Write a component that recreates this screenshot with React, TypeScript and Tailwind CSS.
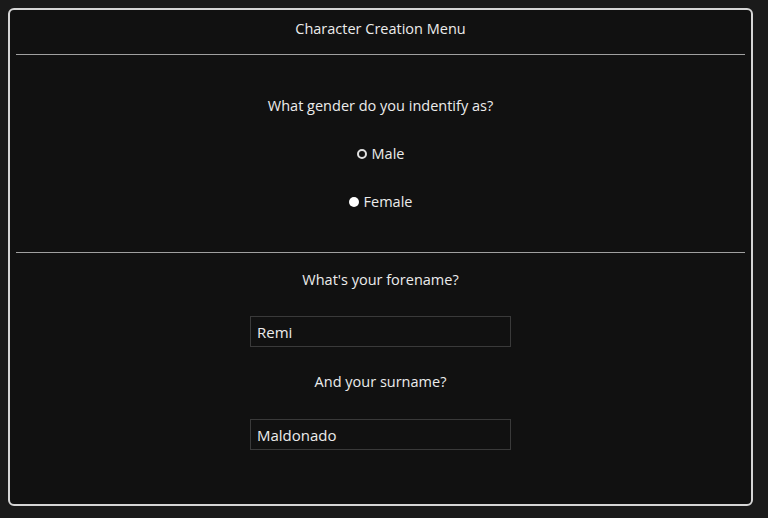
import { useState } from "react";

export default function App() {
    const [gender, setGender] = useState("female");
    const [forename, setForename] = useState("Remi");
    const [surname, setSurname] = useState("Maldonado");

    return (
        <div className="min-h-[518px] bg-[#1a1a1a] p-[8px] font-['Open_Sans',sans-serif] text-[14.5px] text-[#ececec]">
            <div className="h-[498px] w-[745px] rounded-[6px] border-2 border-[#d6d6d6] bg-[#111111] flex flex-col">
                {/* title */}
                <div className="h-[44px] pb-[6px] flex items-center justify-center">Character Creation Menu</div>
                <div className="mx-[6px] h-px bg-[#a0a0a0]" />

                {/* gender */}
                <div className="pt-[41px] pb-[40px] flex flex-col items-center gap-[28px]">
                    <div className="leading-[20px]">What gender do you indentify as?</div>
                    <label className="flex items-center gap-[5px] leading-[20px] cursor-pointer" onClick={() => setGender("male")}>
                        <span className={gender === "male" ? "w-[10px] h-[10px] rounded-full bg-white" : "w-[10px] h-[10px] rounded-full border-2 border-[#e0e0e0]"} />
                        Male
                    </label>
                    <label className="flex items-center gap-[5px] leading-[20px] cursor-pointer" onClick={() => setGender("female")}>
                        <span className={gender === "female" ? "w-[10px] h-[10px] rounded-full bg-white" : "w-[10px] h-[10px] rounded-full border-2 border-[#e0e0e0]"} />
                        Female
                    </label>
                </div>
                <div className="mx-[6px] h-px bg-[#a0a0a0]" />

                {/* names */}
                <div className="pt-[17px] flex flex-col items-center">
                    <div className="leading-[20px]">What's your forename?</div>
                    <input
                        value={forename}
                        onChange={(e) => setForename(e.target.value)}
                        className="mt-[26px] w-[261px] h-[31px] border border-[#3a3a3a] bg-[#111111] px-[6px] text-[15px] text-[#ececec] outline-none"
                    />
                    <div className="mt-[25px] leading-[20px]">And your surname?</div>
                    <input
                        value={surname}
                        onChange={(e) => setSurname(e.target.value)}
                        className="mt-[27px] w-[261px] h-[31px] border border-[#3a3a3a] bg-[#111111] px-[6px] text-[15px] text-[#ececec] outline-none"
                    />
                </div>
            </div>
        </div>
    );
}
